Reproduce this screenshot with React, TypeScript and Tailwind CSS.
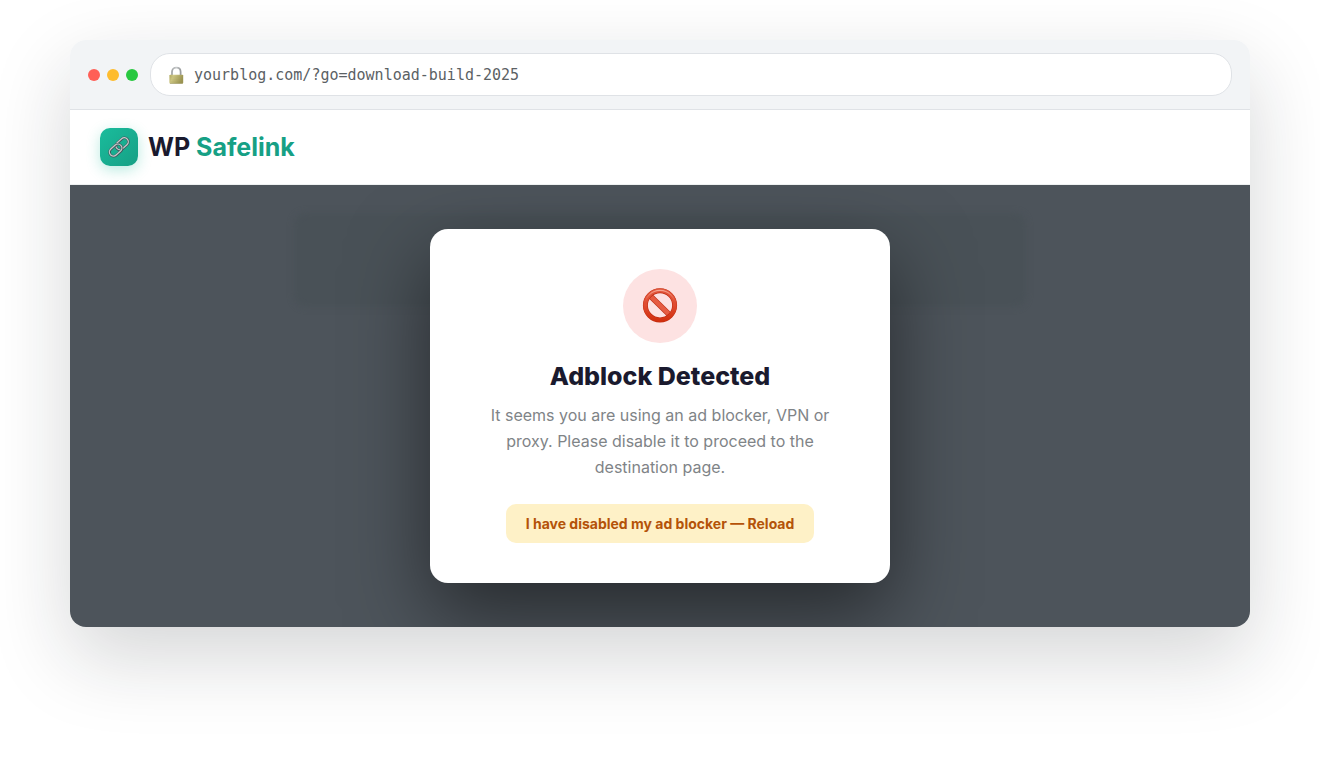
const DOTS = ["bg-[#ff5f57]", "bg-[#febc2e]", "bg-[#28c840]"];

function LockIcon() {
  return (
    <svg viewBox="0 0 16 20" className="h-5 w-4 shrink-0" aria-hidden="true">
      <defs>
        <linearGradient id="lock-body" x1="0" y1="0" x2="1" y2="0.3">
          <stop offset="0" stopColor="#b0a860" />
          <stop offset="0.3" stopColor="#d0c985" />
          <stop offset="1" stopColor="#9c9553" />
        </linearGradient>
        <linearGradient id="lock-shackle" x1="0" y1="0" x2="1" y2="0">
          <stop offset="0" stopColor="#a3a6a7" />
          <stop offset="0.5" stopColor="#c9cccd" />
          <stop offset="1" stopColor="#989b9c" />
        </linearGradient>
      </defs>
      <path
        d="M4 11V6.9C4 4.3 5.8 2.6 8.3 2.6s4.3 1.7 4.3 4.3V11"
        fill="none"
        stroke="url(#lock-shackle)"
        strokeWidth="1.8"
      />
      <rect x="1.4" y="9.7" width="13.8" height="8.9" rx="0.9" fill="url(#lock-body)" />
      <path d="M1.8 12h13M1.8 14.1h13M1.8 16.2h13" stroke="#8b8548" strokeWidth="0.4" opacity="0.4" />
      <path d="M2 18.3h12.6" stroke="#8b8548" strokeWidth="0.6" />
    </svg>
  );
}

function ChainLink() {
  return (
    <>
      <rect x="-7" y="-4" width="14" height="8" rx="4" fill="none" stroke="#41575a" strokeWidth="2.6" />
      <rect x="-7" y="-4.2" width="14" height="8" rx="4" fill="none" stroke="#c3cacb" strokeWidth="1.3" />
    </>
  );
}

function LinkIcon() {
  return (
    <svg viewBox="0 0 24 24" className="size-6" aria-hidden="true">
      <g transform="translate(15.2 8.9) rotate(-42)">
        <ChainLink />
      </g>
      <g transform="translate(8.8 15.2) rotate(-42)">
        <ChainLink />
      </g>
    </svg>
  );
}

function ProhibitedIcon() {
  return (
    <svg viewBox="0 0 36 36" className="size-9" aria-hidden="true">
      <defs>
        <linearGradient id="ban-red" x1="0" y1="0" x2="0" y2="1">
          <stop offset="0" stopColor="#e0563c" />
          <stop offset="0.5" stopColor="#e04a30" />
          <stop offset="1" stopColor="#d2300f" />
        </linearGradient>
        <linearGradient id="ban-shine" x1="0" y1="0" x2="0" y2="1">
          <stop offset="0" stopColor="#f7a793" />
          <stop offset="0.4" stopColor="#f27458" stopOpacity="0" />
        </linearGradient>
      </defs>
      <path d="M7.6 7.2l20.6 20.2" stroke="#bd3016" strokeWidth="5.6" />
      <path d="M7.6 7.2l20.6 20.2" stroke="#e65c42" strokeWidth="4.4" />
      <circle cx="18" cy="17.3" r="14.6" fill="none" stroke="#c02c10" strokeWidth="5" />
      <circle cx="18" cy="17.3" r="14.7" fill="none" stroke="url(#ban-red)" strokeWidth="4" />
      <circle cx="18" cy="17.3" r="15" fill="none" stroke="url(#ban-shine)" strokeWidth="1.2" />
    </svg>
  );
}

function BrowserBar() {
  return (
    <div className="flex items-center gap-3 border-b border-[#dfe2e6] bg-[#f2f4f6] px-[18px] py-[13px]">
      <div className="flex gap-[7px]">
        {DOTS.map((color) => (
          <span key={color} className={`size-3 rounded-full ${color}`} />
        ))}
      </div>
      <label className="flex h-[43px] flex-1 items-center gap-[10px] rounded-[20px] border border-[#dfe2e6] bg-white px-[17px]">
        <LockIcon />
        <input
          type="text"
          readOnly
          aria-label="Address"
          defaultValue="yourblog.com/?go=download-build-2025"
          className="min-w-0 flex-1 bg-transparent font-['DejaVu_Sans_Mono',monospace] text-[15px] leading-5 text-[#5b6164] outline-none"
        />
      </label>
    </div>
  );
}

function SiteHeader() {
  return (
    <header className="flex items-center gap-[10px] border-b border-[#eef1f1] bg-white px-[30px] py-[18px]">
      <span className="flex size-[38px] items-center justify-center rounded-[10px] bg-linear-135 from-[#1abc9c] to-[#16a085] shadow-[0_4px_14px_rgba(26,188,156,0.3)]">
        <LinkIcon />
      </span>
      <span className="text-[25px] leading-8 font-bold text-[#1a1a2e]">
        WP <span className="text-[#16a085]">Safelink</span>
      </span>
    </header>
  );
}

function AdblockModal() {
  return (
    <div
      role="dialog"
      aria-labelledby="adblock-title"
      className="flex w-full max-w-[460px] flex-col items-center rounded-[18px] bg-white p-10 text-center shadow-[0_30px_80px_rgba(0,0,0,0.5)]"
    >
      <div className="flex size-[74px] items-center justify-center rounded-full bg-[#fde2e2]">
        <ProhibitedIcon />
      </div>
      <h2 id="adblock-title" className="mt-[18px] text-[25px] leading-[30px] font-extrabold text-[#1a1a2e]">
        Adblock Detected
      </h2>
      <p className="mt-[11px] text-base leading-[26px] text-[#7f8487]">
        It seems you are using an ad blocker, VPN or proxy. Please disable it to proceed to the destination page.
      </p>
      <button
        type="button"
        className="mt-6 h-[39px] rounded-[10px] bg-[#fef1c7] px-5 text-sm font-bold text-[#b45309]"
      >
        I have disabled my ad blocker — Reload
      </button>
    </div>
  );
}

export default function App() {
  return (
    <div className="min-h-screen overflow-hidden bg-white px-4 py-10 font-['Inter',sans-serif]">
      <main className="mx-auto max-w-[1180px] overflow-hidden rounded-[16px] bg-white shadow-[0_30px_80px_rgba(20,30,32,0.18)]">
        <BrowserBar />
        <SiteHeader />
        <section className="grid overflow-hidden bg-[#4d545b]">
          {/* dimmed page content behind the dialog */}
          <div className="col-start-1 row-start-1 px-6 pt-7" aria-hidden="true">
            <div className="mx-auto h-[94px] max-w-[732px] rounded-xl bg-[#495157] blur-[3px]" />
          </div>
          <div className="relative col-start-1 row-start-1 flex items-center justify-center px-4 py-11">
            <AdblockModal />
          </div>
        </section>
      </main>
    </div>
  );
}
